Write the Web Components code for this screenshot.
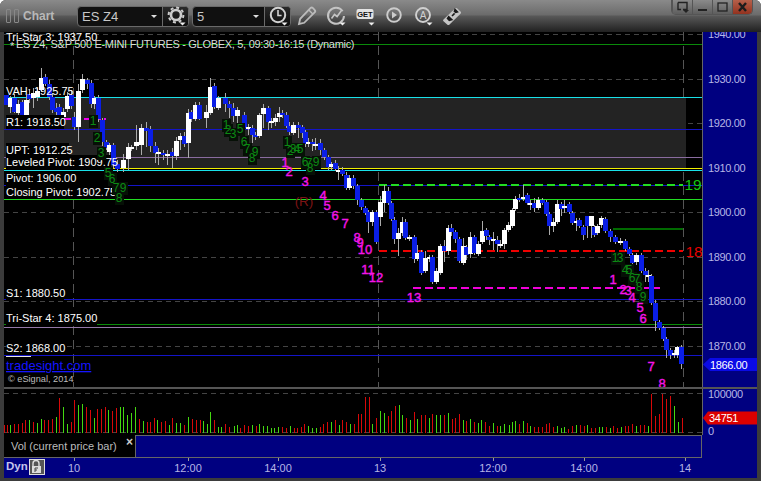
<!DOCTYPE html>
<html>
<head>
<meta charset="utf-8">
<title>Chart</title>
<style>
  html { background: #fff; }
  body { margin: 0; }
</style>
</head>
<body>
<chart-window>
  <chart-toolbar slot="toolbar"></chart-toolbar>
  <price-chart></price-chart>
  <price-axis></price-axis>
  <pane-divider></pane-divider>
  <volume-chart></volume-chart>
  <volume-axis></volume-axis>
  <study-tab>Vol (current price bar)</study-tab>
  <time-axis></time-axis>
</chart-window>

<script>
const FONT = '"Liberation Sans", Arial, sans-serif';
const priceY = p => 212.3 + (1900 - p) * 4.447;

class ChartWindow extends HTMLElement {
  constructor() {
    super();
    this.attachShadow({ mode: 'open' });
    this.shadowRoot.innerHTML = `
      <style>
        :host {
          display: flex;
          flex-direction: column;
          width: 761px;
          height: 481px;
          background: #3b3b3b;
          border-radius: 6px 6px 0 0;
          overflow: hidden;
          font-family: ${FONT};
        }
        .stage {
          display: grid;
          grid-template-columns: 698px 55px;
          grid-template-rows: 355px 2px 46px 23px 20px;
          margin: 0 4px;
        }
      </style>
      <slot name="toolbar"></slot>
      <div class="stage"><slot></slot></div>
    `;
  }
}

const ICONS = {
  gear: `<circle cx="12" cy="11" r="5" fill="none" stroke="#ccc" stroke-width="2.6"/>
         <circle cx="12" cy="11" r="7.4" fill="none" stroke="#ccc" stroke-width="2" stroke-dasharray="3 2.8"/>`,
  clock: `<circle cx="12" cy="11" r="7.2" fill="none" stroke="#d2d2d2" stroke-width="2"/>
          <path d="M12 6v5.5h3.6" fill="none" stroke="#d2d2d2" stroke-width="1.6"/>`,
  pencil: `<path d="M4 20l1.2-5.2L15.4 4.2c.8-.8 1.8-.8 2.6 0l1.6 1.6c.8.8.8 1.8 0 2.6L9.2 18.8z" fill="none" stroke="#bbb" stroke-width="1.8"/>
           <path d="M13.8 6l4 4" stroke="#bbb" stroke-width="1.4"/>`,
  study: `<path d="M18.6 7.2A8 8 0 1 0 20 12" fill="none" stroke="#c4c4c4" stroke-width="2"/>
          <path d="M7.5 14.5l3-4 2.6 2 4-5.5" fill="none" stroke="#c4c4c4" stroke-width="1.6"/>`,
  play: `<circle cx="12" cy="11" r="6.8" fill="none" stroke="#ccc" stroke-width="1.9"/>
         <path d="M10 7.6l5 3.4-5 3.4z" fill="#ccc"/>`,
  ribbon: `<path d="M3.5 15.5L15 4.5c.8-.7 1.6-.7 2.3 0l3.2 3c.7.7.7 1.6 0 2.3L9.5 20.5c-.8.7-1.6.7-2.3 0l-3.7-3.2c-.6-.6-.6-1.2 0-1.8z" fill="#c4c4c4"/>
           <path d="M8.5 11.5l4.8 4.4-4.2 1.3-2.6-2.6zM13.5 7.5l1.2-3.5 4.2 4.2-3.4 1.1z" fill="#1a1a1a"/>
           <path d="M12 12l2.6-2.6" stroke="#1a1a1a" stroke-width="1.6"/>`
};

class ToolIcon extends HTMLElement {
  constructor() {
    super();
    this.attachShadow({ mode: 'open' });
  }

  connectedCallback() {
    const name = this.getAttribute('name');
    const caret = this.hasAttribute('caret');
    let inner = ICONS[name] || '';
    if (name === 'letter') {
      inner = `<circle cx="12" cy="11" r="7" fill="none" stroke="#d0d0d0" stroke-width="1.9"/>
               <text x="12" y="14.6" text-anchor="middle" font-size="10" fill="#d0d0d0" font-family='${FONT}'>A</text>`;
    }
    if (name === 'get') {
      inner = `<rect x="3.5" y="5" width="17" height="10" rx="2" fill="#e4e4e4"/>
               <text x="12" y="12.8" text-anchor="middle" font-size="7.5" font-weight="bold" fill="#111" font-family='${FONT}'>GET</text>`;
    }
    this.shadowRoot.innerHTML = `
      <style>
        :host { display: block; width: 24px; height: 24px; }
        svg { display: block; }
      </style>
      <svg width="24" height="24" viewBox="0 0 24 24">
        ${inner}
        ${caret ? '<path d="M15.5 18.5h6l-3 3z" fill="#eee"/>' : ''}
      </svg>
    `;
  }
}

class ComboBox extends HTMLElement {
  constructor() {
    super();
    this.attachShadow({ mode: 'open' });
    this.shadowRoot.innerHTML = `
      <style>
        :host {
          display: flex;
          align-items: stretch;
          height: 19px;
          box-sizing: content-box;
          border: 1px solid #6a6a6a;
          border-radius: 4px;
          background: #101010;
          color: #c8c8c8;
          font-size: 13px;
        }
        .value { flex: 1; display: flex; align-items: center; padding-left: 4px; }
        .caret {
          align-self: center;
          width: 0; height: 0;
          margin-right: 5px;
          border: 3px solid transparent;
          border-top: 3px solid #ddd;
          border-bottom: 0;
        }
        .btn {
          display: flex; align-items: center; justify-content: center;
          width: 25px;
          border-left: 1px solid #6a6a6a;
          background: linear-gradient(#2a2a2a, #0d0d0d);
          border-radius: 0 3px 3px 0;
        }
      </style>
      <div class="value"><slot></slot></div>
      <div class="caret"></div>
      <div class="btn"><slot name="icon"></slot></div>
    `;
  }
}

class WindowControls extends HTMLElement {
  constructor() {
    super();
    this.attachShadow({ mode: 'open' });
    this.shadowRoot.innerHTML = `
      <style>
        :host {
          display: flex;
          height: 14px;
          border: 1px solid #555;
          border-top: 0;
          border-radius: 0 0 5px 5px;
          overflow: hidden;
        }
        span {
          display: flex; align-items: center; justify-content: center;
          width: 19px;
          border-left: 1px solid #555;
          background: linear-gradient(#8a8a8a, #5e5e5e);
        }
        span:first-child { border-left: 0; }
        .close { background: linear-gradient(#b5604a, #93321f); }
      </style>
      <span><svg width="14" height="12"><path d="M2 1.5h9v7h-4M2 1.5v7h3" fill="none" stroke="#222" stroke-width="1.4"/><path d="M7 9h6l-3 3z" fill="#222"/></svg></span>
      <span><svg width="12" height="12"><path d="M1 9h9" stroke="#222" stroke-width="2"/></svg></span>
      <span><svg width="14" height="12"><rect x="2" y="2" width="9" height="8" fill="none" stroke="#222" stroke-width="1.3"/></svg></span>
      <span class="close"><svg width="14" height="12"><path d="M3 2l7 8M10 2l-7 8" stroke="#1c1c1c" stroke-width="2.4"/></svg></span>
    `;
  }
}

class ChartToolbar extends HTMLElement {
  constructor() {
    super();
    this.attachShadow({ mode: 'open' });
    this.shadowRoot.innerHTML = `
      <style>
        :host {
          display: flex;
          align-items: center;
          height: 32px;
          padding: 0 8px 0 6px;
          box-sizing: border-box;
          position: relative;
          background: linear-gradient(#8a8a8a 0, #6b6b6b 15px, #585858 16px, #202020 32px);
        }
        .grip { width: 3px; height: 12px; border: 1px solid #888; margin-right: 3px; border-radius: 1px; }
        .grip + .grip { margin-right: 4px; }
        .name { width: 54px; color: #b8b8b8; font-size: 12px; font-weight: bold; }
        combo-box.sym { width: 110px; margin-right: 3px; }
        combo-box.per { width: 97px; margin-right: 4px; }
        tool-icon { margin-right: 5px; }
        window-controls { position: absolute; top: 0; right: 8px; }
      </style>
      <div class="grip"></div><div class="grip"></div>
      <div class="name">Chart</div>
      <combo-box class="sym">ES Z4<tool-icon slot="icon" name="gear" caret style="margin:0"></tool-icon></combo-box>
      <combo-box class="per">5<tool-icon slot="icon" name="clock" caret style="margin:0"></tool-icon></combo-box>
      <tool-icon name="pencil"></tool-icon>
      <tool-icon name="study" caret></tool-icon>
      <tool-icon name="get" caret></tool-icon>
      <tool-icon name="play"></tool-icon>
      <tool-icon name="letter" caret></tool-icon>
      <tool-icon name="ribbon"></tool-icon>
      <window-controls></window-controls>
    `;
  }
}

// candles in page pixels: x, body top, body bottom, colour, wick top, wick bottom
const CANDLES = [
  [6,95,105,'b'],[10,98,107,'w',96,113],[14,98,112,'b',94,113],[18,104,113,'w',100,120],[22,102,118,'b',100,121],
  [26,100,118,'w',95,123],[29,94,99,'b',90,103],[33,93,98,'w',88,108],[37,91,97,'w',88,101],[41,78,90,'w',68,92],
  [45,77,84,'b',74,86],[49,84,97,'b',80,100],[52,97,110,'b',93,113],[56,108,112,'b',103,116],[59,107,118,'b',104,124],
  [63,112,117,'w',108,120],[67,96,109,'w',92,112],[71,95,106,'b',90,109],[74,117,127,'b',112,130],[78,91,127,'w',84,142],
  [82,79,90,'w',74,93],[87,80,84,'b',78,89],[91,83,104,'b',80,108],[94,98,104,'w',96,109],[98,98,119,'b',95,122],
  [102,120,142,'b',118,146],[106,142,148,'b',140,150],[109,145,152,'w',143,157],[113,145,165,'b',143,168],[117,164,169,'b',160,172],
  [123,160,168,'w',154,172],[128,147,159,'w',143,170],[131,147,149,'w',145,151],[136,142,146,'w',125,150],[141,128,145,'w',124,155],
  [146,128,131,'b',122,147],[150,129,146,'b',126,152],[155,146,153,'b',142,163],[158,152,154,'w',148,165],[163,153,155,'b',150,160],
  [167,154,156,'w',150,165],[172,152,156,'b',148,168],[176,141,156,'w',137,160],[180,136,140,'w',133,150],[184,136,144,'b',132,147],
  [188,113,143,'w',109,158],
  [191,112,119,'b',110,122],[195,105,119,'w',102,121],[199,105,119,'b',102,120],[206,112,118,'w',105,128],
  [210,87,113,'w',78,115],[214,86,107,'b',83,109],[218,98,108,'w',96,110],[225,98,104,'b',93,112],
  [229,104,108,'b',101,118],[233,108,116,'b',103,122],[237,110,116,'w',107,125],[244,115,128,'b',112,130],[248,127,129,'w',124,135],
  [252,128,135,'b',125,143],[255,135,137,'b',132,140],[259,115,136,'w',113,138],[263,108,114,'w',104,128],[268,108,122,'b',106,130],
  [271,121,123,'w',118,128],[275,118,122,'w',114,126],[279,113,117,'w',107,122],[282,113,115,'b',110,118],[286,115,126,'b',112,128],
  [289,126,132,'b',122,135],[293,125,133,'w',122,135],[298,125,128,'b',122,138],[302,127,133,'b',125,138],[305,132,144,'b',130,147],
  [308,142,144,'w',138,147],[312,142,144,'b',139,151],[315,144,146,'w',138,150],[320,143,150,'b',139,155],[324,150,157,'b',148,160],
  [328,157,167,'b',155,170],[331,164,167,'w',162,170],[335,163,169,'b',160,171],[338,170,172,'w',166,180],[342,170,174,'b',167,176],
  [346,175,188,'b',172,190],[349,178,188,'w',175,190],[353,178,186,'b',175,189],[357,186,200,'b',184,205],[361,200,207,'b',198,210],
  [365,208,213,'b',206,215],[368,212,222,'b',210,233],[372,212,222,'w',210,226],[376,212,242,'b',210,244],[380,202,217,'w',196,226],
  [384,191,203,'w',185,212],[388,191,203,'b',187,205],[391,203,219,'b',201,221],[394,220,239,'b',217,244],[398,233,239,'w',228,256],
  [402,222,233,'w',217,236],[405,222,238,'b',219,240],[409,237,239,'w',235,241],[414,237,259,'b',235,263],[417,253,259,'w',245,261],
  [421,252,273,'b',250,275],[425,258,271,'w',251,273],[429,257,259,'w',255,262],[432,257,282,'b',255,284],[436,271,282,'w',268,284],
  [440,246,273,'w',244,275],[444,246,251,'b',240,262],[448,228,251,'w',225,255],[451,228,232,'b',224,236],[455,232,239,'b',230,243],
  [459,239,261,'b',237,263],[463,246,263,'w',238,265],[466,247,255,'b',245,260],[470,237,254,'w',232,258],[474,237,253,'b',235,255],
  [478,244,254,'w',241,256],[482,231,242,'w',221,244],[486,230,236,'b',228,240],[489,237,240,'b',235,245],[493,239,241,'w',232,250],
  [497,240,244,'b',236,252],[500,244,246,'w',240,248],[504,230,244,'w',228,249],[508,225,230,'w',222,232],[512,210,226,'w',208,228],
  [515,199,209,'w',196,211],[519,198,200,'b',194,202],[523,197,199,'w',185,201],[527,195,203,'b',193,205],[530,203,205,'w',200,210],
  [534,203,208,'b',198,212],[538,200,208,'w',197,210],[542,200,203,'b',198,205],[546,202,214,'b',200,216],[549,214,226,'b',212,235],
  [553,222,226,'w',218,232],[557,204,222,'w',200,224],[561,204,209,'b',202,216],[564,206,208,'w',200,213],[569,204,212,'b',202,214],
  [572,213,223,'b',211,225],[576,221,223,'w',218,231],[579,220,226,'b',218,228],[583,227,235,'b',225,240],[587,216,226,'b',216,238],
  [591,216,226,'w',216,238],[594,227,235,'b',225,237],[597,226,233,'w',224,235],[601,218,225,'w',216,228],[605,219,231,'b',217,233],
  [610,231,237,'b',229,242],[615,237,242,'b',235,244],[620,241,243,'w',238,245],[625,241,249,'b',239,251],[629,249,254,'b',247,256],
  [632,255,263,'b',253,265],[636,255,262,'w',253,265],[641,255,271,'b',253,273],[645,271,275,'b',268,282],[648,275,277,'w',270,282],
  [651,276,303,'b',274,305],[655,303,321,'b',300,331],[659,322,328,'b',320,330],[663,328,339,'b',326,341],[666,339,350,'b',337,358],
  [670,350,355,'b',348,359],[674,353,355,'w',350,358],[677,347,355,'w',346,358],[681,347,364,'b',345,369]
];

// volume bars read off two zoomed crops: crop x, colour, crop top
const VOL_A = `12r120 20r120 30g120 42r118 54r118 66r114 76r106 88g106 99r110 111g114 124g102 133r104 145r104 157r102 168g96 178r40 189g66 202g117 213r110 223r45 235g60 246g57 258r66 270r74 281g100 292r72 303r72 315r66 325g74 337r78 349r68 360g66 370g66 382g90 394g84 406g66 417r102 428g108 440r110 451r110 462r98 472g104 484r110 495r108 507g120 517r98 529g114 541g114 552r120 565g96 575r102 587r104 599r104 610g108 620g116 631g81 642r104 654g126 663g126 676r116 688r126 701g124 711g120 721r128 733r120 745r122 756g120 767r122 778g116 790g122 801g124 812g128 823g128 835g126 847r126 858r128 869g124 881r128 892r128 903r126 913r116 925g124 937g130 949g130 959r126 970r116 982r110 993g110 1004r104 1016g120 1027r104 1039r110 1050g116 1061r116 1073r87 1084r87 1096r36 1106r36 1117g118 1128r100`;
const VOL_B = `0g78 13g84 23r93 34r78 46r63 58g60 67g90 79r99 91g105 103r81 112g102 124r90 136r90 148g99 157r87 169g90 181g90 193r90 205g84 215r102 226r100 238r87 250g105 259r108 271g102 283r111 295g114 304g105 316r111 328r123 340g114 351r123 361g123 373g118 386g120 397g111 406g108 418r117 430g108 442r114 451g123 463r126 475r126 487r126 499r117 508r114 520r126 532g123 544g129 553g126 565r132 577r123 589g120 601r120 611r123 622g120 634r129 646r129 656g126 667g126 679r126 691g129 700r123 712r129 724g126 736r123 745r123 757r118 769g123 781r120 793r120 803g123 814r27 826r93 838r87 847r27 859r42 871r33 883g63 893g111 905r99`;

// sequence counts, page pixels of the digit centre
const MAGENTA = [
  ['1',285,162],['2',289,171],['3',305,181],['4',323,195],['5',327,205],['6',335,215],['7',345,223],['8',357,237],['9',360,242],
  ['10',365,249],['11',368,269],['12',376,277],['13',414,297],
  ['1',613,279],['2',623,289],['3',628,290],['4',632,297],['5',640,307],['6',643,318],['7',651,366],['8',662,383]
];
const GREEN = [
  ['1',93,121],['2',97,138],['3',101,153],['5',108,173],['6',112,179],['7',116,188],['9',123,188],['8',119,198],
  ['1',226,125],['2',228,130],['3',233,134],['5',240,129],['6',244,142],['7',247,149],['9',255,152],['8',252,158],
  ['1',287,142],['2',290,151],['3',293,149],['4',297,149],['5',300,149],['6',305,162],['7',309,163],['9',316,162],['8',310,168],
  ['1',615,258],['3',620,258],['4',625,270],['5',629,270],['6',632,278],['7',637,279],['8',639,287],['9',643,297]
];
const LEVELS = [
  // text, x, y of the box top, box width (0 = no box)
  ['Tri-Star 3: 1937.50',6,30,0],
  ['VAH: 1925.75',6,84,0],
  ['R1: 1918.50',6,115,58],
  ['UPT: 1912.25',6,143,63],
  ['Leveled Pivot: 1909.75',6,155,105],
  ['Pivot: 1906.00',6,171,68],
  ['Closing Pivot: 1902.75',6,185,106],
  ['S1: 1880.50',6,286,58],
  ['Tri-Star 4: 1875.00',6,311,91],
  ['S2: 1868.00',6,341,58]
];

const line = (x1, y1, x2, y2, color, w = 1, dash = '') =>
  `<line x1="${x1}" y1="${y1}" x2="${x2}" y2="${y2}" stroke="${color}" stroke-width="${w}"${dash ? ` stroke-dasharray="${dash}"` : ''}/>`;

class PriceChart extends HTMLElement {
  constructor() {
    super();
    this.attachShadow({ mode: 'open' });
  }

  connectedCallback() {
    let grid = '';
    for (let p = 1940; p >= 1870; p -= 10) {
      const y = Math.round(priceY(p)) + 0.5;
      grid += line(4, y, 702, y, '#444', 1, '5 4');
    }
    for (const x of [73.5, 378.5, 683.5]) grid += line(x, 32, x, 387, '#555', 1, '9 5');

    const band = `<rect x="4" y="97" width="682" height="72" fill="#232323"/>`;

    const levels = [
      line(4, 44.5, 702, 44.5, '#0a8a0a'),
      line(4, 97.5, 702, 97.5, '#19e0e8'),
      line(64, 118.5, 106, 118.5, '#f000f0', 2, '7 3'),
      line(4, 129.5, 702, 129.5, '#1414c8'),
      line(4, 157.5, 702, 157.5, '#8a6ca0'),
      line(4, 168.5, 702, 168.5, '#f0f000'),
      line(4, 170.5, 702, 170.5, '#19e0e8'),
      line(4, 185.5, 702, 185.5, '#1414c8'),
      line(4, 199.5, 702, 199.5, '#22dd22'),
      line(4, 299.5, 702, 299.5, '#1414c8'),
      line(4, 324.5, 702, 324.5, '#0a8a0a'),
      line(4, 327.5, 702, 327.5, '#9478a8'),
      line(4, 355.5, 702, 355.5, '#1414c8'),
      line(379, 184.5, 683, 184.5, '#22dd22', 2, '8 4'),
      line(379, 250.5, 683, 250.5, '#f00000', 2, '8 4'),
      line(413, 288, 660, 288, '#f000d8', 2, '8 4'),
      line(613, 228.5, 683, 228.5, '#006a00', 2)
    ].join('');

    const wicks = CANDLES.map(c => {
      if (c[4] === undefined) return '';
      return line(c[0] + 0.5, c[4], c[0] + 0.5, c[5], '#aaa');
    }).join('');
    const bodies = CANDLES.map(c =>
      `<rect x="${c[0] - 2}" y="${c[1]}" width="5" height="${c[2] - c[1]}" fill="${c[3] === 'w' ? '#fff' : '#0a1ee6'}"/>`
    ).join('');

    const labels = LEVELS.map(([t, x, y, w]) => `
      ${w ? `<rect x="${x}" y="${y}" width="${w}" height="14" fill="#000"/>` : ''}
      <text class="lvl" x="${x}" y="${y + 11}">${t}</text>`).join('');

    const boxes = GREEN.map(([, x, y]) => `<rect x="${x - 4}" y="${y - 6}" width="9" height="13" fill="#061006"/>`).join('');
    const greens = GREEN.map(([t, x, y]) => `<text class="seq" x="${x}" y="${y + 4}">${t}</text>`).join('');
    const magentas = MAGENTA.map(([t, x, y]) => `<text class="mag" x="${x}" y="${y + 5}">${t}</text>`).join('');

    this.shadowRoot.innerHTML = `
      <style>
        :host { display: block; width: 698px; height: 355px; background: #000; overflow: hidden; }
        svg { display: block; font-family: ${FONT}; }
        line, rect { shape-rendering: crispEdges; }
        .lvl { font-size: 11px; fill: #fff; }
        .title { font-size: 11px; fill: #dcdcdc; letter-spacing: -0.3px; }
        .seq { font-size: 12px; fill: #0c8a14; text-anchor: middle; }
        .mag { font-size: 13px; fill: #f414e8; text-anchor: middle; stroke: #f414e8; stroke-width: .4; }
        .big { font-size: 15.5px; text-anchor: middle; }
        .link { font-size: 13px; fill: #1414ff; text-decoration: underline; }
        .copy { font-size: 9.2px; fill: #bdbdbd; }
      </style>
      <svg width="698" height="355" viewBox="4 32 698 355">
        ${grid}${band}${levels}${wicks}${bodies}${labels}${boxes}${greens}${magentas}
        <text class="title" x="10" y="50">*</text>
        <text class="title" x="16" y="48">ES Z4, S&amp;P 500 E-MINI FUTURES - GLOBEX, 5, 09:30-16:15 (Dynamic)</text>
        <text x="304" y="206" font-size="13.5" fill="#7c1414" text-anchor="middle">(R)</text>
        <text class="big" x="693" y="190" fill="#12c812">19</text>
        <text class="big" x="694" y="257" fill="#e80000">18</text>
        ${line(6, 356.5, 31, 356.5, '#e8e8e8', 1)}
        <text class="link" x="6" y="370">tradesight.com</text>
        <text class="copy" x="8" y="382">© eSignal, 2014</text>
      </svg>
    `;
  }
}

class PriceAxis extends HTMLElement {
  constructor() {
    super();
    this.attachShadow({ mode: 'open' });
  }

  connectedCallback() {
    let ticks = '';
    for (let p = 1940; p >= 1870; p -= 10) {
      const y = priceY(p);
      ticks += `<text x="708" y="${y + 4}">${p}.00</text>`;
    }
    this.shadowRoot.innerHTML = `
      <style>
        :host { display: block; width: 55px; height: 355px; background: #000080; overflow: hidden; }
        svg { display: block; font-family: ${FONT}; }
        text { font-size: 11px; fill: #b6b6e6; letter-spacing: -0.35px; }
        .cur { fill: #fff; }
      </style>
      <svg width="55" height="355" viewBox="702 32 55 355">
        ${line(702.5, 32, 702.5, 387, '#666')}
        ${ticks}
        <path d="M703 364.5l7-6.5h47v13h-47z" fill="#0a0ae6"/>
        <text class="cur" x="710" y="369">1866.00</text>
      </svg>
    `;
  }
}

class PaneDivider extends HTMLElement {
  constructor() {
    super();
    this.attachShadow({ mode: 'open' });
    this.shadowRoot.innerHTML = `<style>:host { display: block; grid-column: 1 / 3; background: #555; }</style>`;
  }
}

class VolumeChart extends HTMLElement {
  constructor() {
    super();
    this.attachShadow({ mode: 'open' });
  }

  connectedCallback() {
    const bars = (src, offset) => src.split(' ').map(item => {
      const m = item.match(/(\d+)([rg])(\d+)/);
      const x = Math.round(+m[1] / 3 + offset);
      const top = Math.round(385 + +m[3] / 3);
      const color = m[2] === 'r' ? '#d80808' : '#44d810';
      return `<rect x="${x}" y="${top}" width="1" height="${433 - top}" fill="${color}"/>`;
    }).join('');
    this.shadowRoot.innerHTML = `
      <style>
        :host { display: block; width: 698px; height: 46px; background: #000; }
        svg { display: block; }
        rect, line { shape-rendering: crispEdges; }
      </style>
      <svg width="698" height="46" viewBox="4 389 698 46">
        ${line(4, 393.5, 702, 393.5, '#444', 1, '5 4')}
        ${line(4, 432.5, 702, 432.5, '#444', 1, '5 4')}
        ${bars(VOL_A, 0)}${bars(VOL_B, 380)}
      </svg>
    `;
  }
}

class VolumeAxis extends HTMLElement {
  constructor() {
    super();
    this.attachShadow({ mode: 'open' });
    this.shadowRoot.innerHTML = `
      <style>
        :host { display: block; width: 55px; height: 46px; background: #000080; }
        svg { display: block; font-family: ${FONT}; }
        text { font-size: 11px; fill: #b6b6e6; letter-spacing: -0.3px; }
      </style>
      <svg width="55" height="46" viewBox="702 389 55 46">
        ${line(702.5, 389, 702.5, 435, '#666')}
        <text x="708" y="398">100000</text>
        <path d="M703 418l5-6.5h49v13h-49z" fill="#dc0000"/>
        <text x="709" y="422" style="fill:#fff">34751</text>
        <text x="708" y="434.5">0</text>
      </svg>
    `;
  }
}

class StudyTab extends HTMLElement {
  constructor() {
    super();
    this.attachShadow({ mode: 'open' });
    this.shadowRoot.innerHTML = `
      <style>
        :host {
          display: flex;
          grid-column: 1 / 3;
          height: 23px;
          background: #000080;
        }
        .tab {
          display: flex;
          align-items: center;
          position: relative;
          box-sizing: border-box;
          width: 132px;
          padding: 0 0 1px 7px;
          background: #000;
          color: #bcbcbc;
          font-size: 11px;
          border-bottom: 1px solid #666;
          border-right: 1px solid #666;
        }
        .x { position: absolute; left: 122px; top: 0; color: #ccc; font-size: 12px; font-weight: bold; }
        .rest {
          width: 566px;
          box-sizing: border-box;
          border-top: 1px solid #666;
          border-right: 1px solid #666;
          border-bottom: 1px solid #666;
        }
      </style>
      <div class="tab"><slot></slot><span class="x">×</span></div>
      <div class="rest"></div>
    `;
  }
}

class TimeAxis extends HTMLElement {
  constructor() {
    super();
    this.attachShadow({ mode: 'open' });
  }

  connectedCallback() {
    const marks = [['10',74],['12:00',188],['14:00',278],['13',380],['12:00',493],['14:00',584],['14',685]];
    this.shadowRoot.innerHTML = `
      <style>
        :host { display: block; grid-column: 1 / 3; height: 20px; background: #000080; }
        svg { display: block; font-family: ${FONT}; }
        .t { font-size: 11px; fill: #b6b6e6; text-anchor: middle; }
        .dyn { font-size: 11.5px; font-weight: bold; fill: #c4c4ec; }
        line, rect { shape-rendering: crispEdges; }
      </style>
      <svg width="753" height="20" viewBox="4 458 753 20">
        ${marks.map(([t, x]) => line(x + .5, 458, x + .5, 461, '#999') + `<text class="t" x="${x}" y="472">${t}</text>`).join('')}
        <text class="dyn" x="6" y="470">Dyn</text>
        <rect x="29.5" y="459.5" width="15" height="15" fill="#555" stroke="#ddd"/>
        <path d="M33 466v-2.5a3 3 0 0 1 6 0v2.5" fill="none" stroke="#ddd" stroke-width="1.4"/>
        <rect x="32" y="466" width="9" height="7" fill="#ddd"/>
        <path d="M35 472v-4h3M35 470h2" fill="none" stroke="#444" stroke-width="1"/>
      </svg>
    `;
  }
}

customElements.define('chart-window', ChartWindow);
customElements.define('tool-icon', ToolIcon);
customElements.define('combo-box', ComboBox);
customElements.define('window-controls', WindowControls);
customElements.define('chart-toolbar', ChartToolbar);
customElements.define('price-chart', PriceChart);
customElements.define('price-axis', PriceAxis);
customElements.define('pane-divider', PaneDivider);
customElements.define('volume-chart', VolumeChart);
customElements.define('volume-axis', VolumeAxis);
customElements.define('study-tab', StudyTab);
customElements.define('time-axis', TimeAxis);
</script>
</body>
</html>
